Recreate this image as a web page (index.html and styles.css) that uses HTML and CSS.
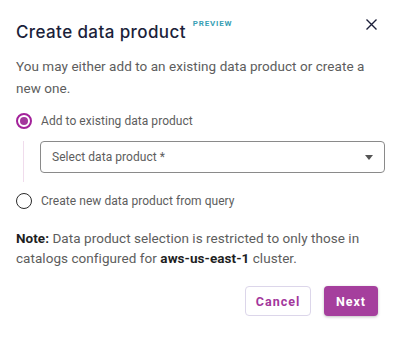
FILE: index.html
```html
<!DOCTYPE html>
<html lang="en">

<head>
    <meta charset="UTF-8">
    <meta name="viewport" content="width=device-width, initial-scale=1.0">
    <title>Create data product</title>
    <link rel="stylesheet" href="styles.css">
</head>

<body>
    <div class="dialog">
        <div class="dialog-header">
            <h1>Create data product</h1>
            <span class="badge">PREVIEW</span>
            <button class="close" type="button" aria-label="Close">
                <svg width="11" height="11" viewBox="0 0 11 11">
                    <path d="M0.5 0.5 L10.5 10.5 M10.5 0.5 L0.5 10.5" stroke="#1c1f3a" stroke-width="1.4" fill="none" />
                </svg>
            </button>
        </div>

        <p class="intro">You may either add to an existing data product or create a new one.</p>

        <div class="options">
            <label class="option">
                <span class="radio checked"></span>
                <span>Add to existing data product</span>
            </label>
            <div class="nested">
                <div class="select">
                    <span>Select data product *</span>
                    <span class="caret"></span>
                </div>
            </div>
            <label class="option">
                <span class="radio"></span>
                <span>Create new data product from query</span>
            </label>
        </div>

        <p class="note"><b>Note:</b> Data product selection is restricted to only those in catalogs configured for <b>aws-us-east-1</b> cluster.</p>

        <div class="actions">
            <button class="btn cancel" type="button">Cancel</button>
            <button class="btn next" type="button">Next</button>
        </div>
    </div>
</body>

</html>
```

FILE: styles.css
```css
body {
    margin: 0;
    padding: 0;
    background-color: white;
    font-family: Roboto, "Liberation Sans", sans-serif;
    color: #5a5a5a;
}

.dialog {
    width: 400px;
    height: 337px;
    padding: 14px 15px 0 16px;
    box-sizing: border-box;
}

.dialog-header {
    display: flex;
    align-items: flex-start;
    height: 30px;
}

.dialog-header h1 {
    margin: 8px 0 0 0;
    font-family: Inter, "Noto Sans", sans-serif;
    font-size: 17px;
    line-height: 20px;
    font-weight: 500;
    color: #1c1f3a;
    letter-spacing: 0.4px;
}

.badge {
    margin: 5px 0 0 7px;
    font-family: Roboto, sans-serif;
    font-size: 8px;
    line-height: 10px;
    font-weight: 700;
    letter-spacing: 0.8px;
    color: #3a9fb5;
}

.close {
    margin: 5px 8px 0 auto;
    padding: 0;
    border: none;
    background: none;
    width: 11px;
    height: 11px;
    line-height: 0;
    cursor: pointer;
}

.intro {
    margin: 11px 0 0 0;
    font-size: 13.5px;
    line-height: 22px;
    letter-spacing: 0.05px;
    color: #5d5d5d;
}

.options {
    margin-top: 12px;
}

.option {
    display: flex;
    align-items: center;
    gap: 9px;
    height: 20px;
    font-size: 12px;
    letter-spacing: 0.05px;
    color: #5d5d5d;
}

.radio {
    width: 16px;
    height: 16px;
    border: 1.5px solid #2a2a2a;
    border-radius: 50%;
    box-sizing: border-box;
    position: relative;
}

.radio.checked {
    border: 2px solid #a3229a;
}

.radio.checked::after {
    content: "";
    position: absolute;
    top: 2px;
    left: 2px;
    width: 8px;
    height: 8px;
    border-radius: 50%;
    background-color: #a3379c;
}

.nested {
    margin: 10px 0 9px 7px;
    padding: 0 0 9px 16px;
    border-left: 1px solid #f0dcec;
}

.select {
    display: flex;
    align-items: center;
    justify-content: space-between;
    height: 32px;
    padding: 0 11px 0 11px;
    border: 1px solid #8a8a8a;
    border-radius: 4px;
    box-sizing: border-box;
    font-size: 12px;
    letter-spacing: 0.05px;
    color: #5d5d5d;
}

.caret {
    width: 0;
    height: 0;
    border-left: 4.5px solid transparent;
    border-right: 4.5px solid transparent;
    border-top: 5px solid #555;
}

.note {
    margin: 16.5px 0 0 0;
    font-size: 13.5px;
    line-height: 20px;
    letter-spacing: 0.05px;
    color: #5d5d5d;
}

.note b {
    color: #1f1f1f;
}

.actions {
    display: flex;
    justify-content: flex-end;
    gap: 13px;
    margin: 18.5px 7px 0 0;
}

.btn {
    height: 30px;
    border-radius: 4px;
    font-family: Roboto, sans-serif;
    font-size: 12.5px;
    font-weight: 700;
    letter-spacing: 1px;
    cursor: pointer;
}

.cancel {
    width: 66px;
    border: 1px solid #dcd6ea;
    background-color: white;
    color: #a3379c;
}

.next {
    width: 54px;
    border: none;
    background-color: #a53f9d;
    color: white;
    box-shadow: 0 1px 3px rgba(0, 0, 0, 0.25);
}
```
